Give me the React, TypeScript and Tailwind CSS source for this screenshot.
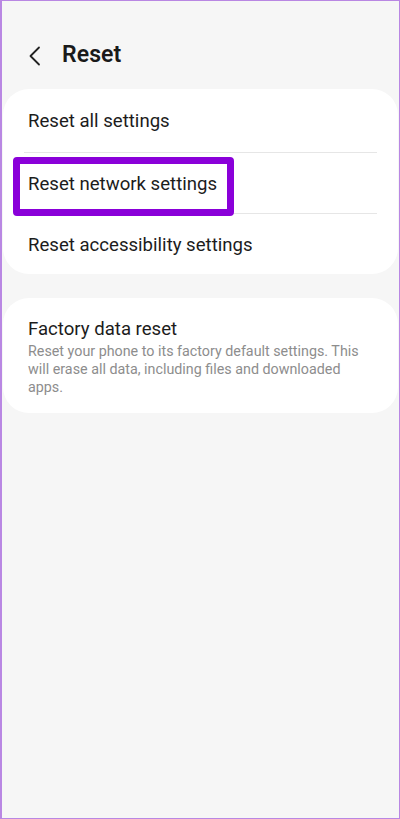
import React from "react";

export default function App() {
  const font = { fontFamily: "Roboto, 'Noto Sans', sans-serif" };
  return (
    <div
      className="w-[400px] h-[819px] bg-[#f6f6f6] border-t border-r border-b border-l-2 border-[#b987e3] overflow-hidden"
      style={font}
    >
      <div className="flex items-center h-[84px] pt-[25px] pl-[25px]">
        <svg width="16" height="20" viewBox="0 0 16 20" fill="none" className="mr-[19px]">
          <path d="M12 1.5 L3.5 10 L12 18.5" stroke="#222" strokeWidth="1.8" strokeLinecap="round" strokeLinejoin="round" />
        </svg>
        <span className="text-[23px] font-semibold text-[#1a1a1a] tracking-[0.1px]">Reset</span>
      </div>
      <div className="mt-[4px] mx-[1px] bg-white rounded-[26px] relative">
        <div className="h-[63px] flex items-center pt-[3px] pl-[25px] text-[18.6px] text-[#1c1c1c]">Reset all settings</div>
        <div className="mx-[21px] h-px bg-[#e6e6e6]" />
        <div className="h-[60px] flex items-center pt-[3px] pl-[25px] text-[18.6px] text-[#1c1c1c]">Reset network settings</div>
        <div className="mx-[21px] h-px bg-[#e6e6e6]" />
        <div className="h-[60px] flex items-center pt-[3px] pl-[25px] text-[18.6px] text-[#1c1c1c]">Reset accessibility settings</div>
        <div className="absolute left-[10px] top-[68px] w-[221px] h-[59px] border-[7px] border-[#8a00d9] rounded-[4px]" />
      </div>
      <div className="mt-[24px] mx-[1px] bg-white rounded-[26px] pl-[25px] pr-[30px] pt-[19px] pb-[17px]">
        <div className="text-[18.6px] text-[#1c1c1c] leading-[24px]">Factory data reset</div>
        <div className="text-[14.3px] text-[#8d8d8d] leading-[18px] mt-[1px]">
          Reset your phone to its factory default settings. This will erase all data, including files and downloaded apps.
        </div>
      </div>
    </div>
  );
}
